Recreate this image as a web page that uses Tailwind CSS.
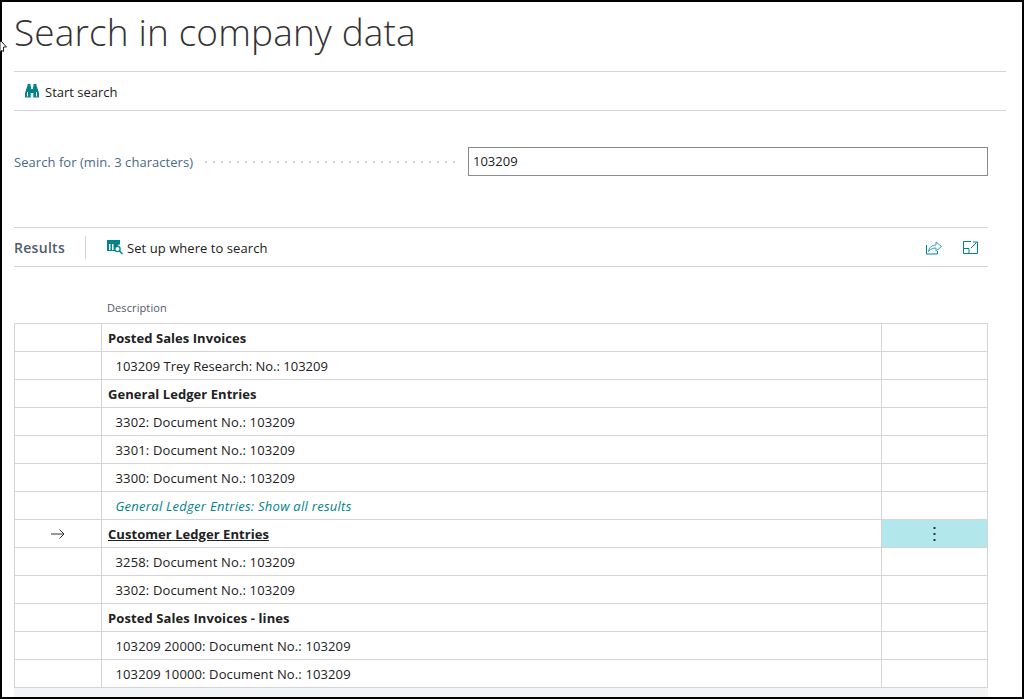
<!DOCTYPE html>
<html><head><meta charset="utf-8"><script src="https://cdn.jsdelivr.net/npm/@tailwindcss/browser@4"></script></head>
<body class="m-0 bg-white">
<div class="relative w-[1024px] h-[699px] bg-white border-2 border-black font-['Open_Sans','Noto_Sans',sans-serif] text-[13px] text-[#212121]">
  <svg class="absolute left-[-2px] top-[39px]" width="8" height="14" viewBox="0 0 8 14"><path d="M0 .5H1.500L6.500 6H3.500V10.500L1.500 9.500L0 11Z" fill="#fff" stroke="#222" stroke-width="1"/></svg>
  <div class="pl-[12px] pr-[16px]">
    <div class="h-[70px] border-b border-[#d4d4d8]">
      <h1 class="pt-[5px] text-[37px] leading-[50px] font-light text-[#333] tracking-[0.13px]">Search in company data</h1>
    </div>
    <div class="h-[39px] border-b border-[#d4d4d8] flex items-center pl-[11px] gap-[6px]">
      <svg width="14" height="14" viewBox="0 0 14 14"><path fill="#00838a" fill-rule="evenodd" d="M2.500 0h3v2.500h.6V5H8V2.500h.5V0h3v2.500h.4L14 9v4.500H8.300V9H5.700v4.500H0V9l2.100-6.500h.4ZM2 8v4.500h1V8ZM11 8v4.500h1V8Z"/></svg>
      <span class="pt-[4px]">Start search</span>
    </div>
    <div class="flex items-center h-[104px] mr-[18px] pb-[4px]">
      <span class="w-[179px] pt-[3px] text-[#4a6a8a] shrink-0 whitespace-nowrap tracking-[0.05px]">Search for (min. 3 characters)</span>
      <div class="w-[252px] h-[2px] shrink-0 mr-[11px] ml-[12px] bg-[linear-gradient(to_right,#d0d0d4_2px,transparent_2px)] bg-[length:8px_2px] mt-[2px]"></div>
      <div class="flex-1 h-[29px] border border-[#8a8a8a] flex items-center pl-[4px] pt-[2px]">103209</div>
    </div>
    <div class="mr-[18px] h-[1px] mt-[12px] bg-[#d4d4d8]"></div>
    <div class="mr-[18px] h-[39px] border-b border-[#d4d4d8] flex items-center">
      <span class="w-[71px] text-[14px] font-semibold text-[#505c6d] tracking-[0.3px]">Results</span>
      <div class="w-px h-[23px] bg-[#d4d4d8]"></div>
      <div class="flex items-center gap-[4px] pl-[21px]">
        <svg width="16" height="15" viewBox="0 0 16 15"><path fill="#00838a" d="M0 0h13v4.500h-1.500V5.500a4 4 0 0 0-3.500 5.500H0Z"/><path fill="#fff" d="M2 4h1.500v6H2zM5 4h1.500v6H5z"/><circle cx="10.500" cy="9" r="2.600" fill="none" stroke="#00838a" stroke-width="1.300"/><path d="M12.500 11L15.500 14" stroke="#00838a" stroke-width="1.500"/></svg>
        <span class="pt-[4px] tracking-[0.06px]">Set up where to search</span>
      </div>
      <div class="ml-auto flex items-center gap-[21px] pr-[10px]">
        <svg width="16" height="15" viewBox="0 0 16 15" fill="none"><path d="M.5 5v9h11v-3" stroke="#00838a"/><path d="M2.500 11.500C3 7.500 6 5 10 5V2l5.500 4.500L10 11V8C7 8 4.500 9 2.500 11.500Z" stroke="#2aa3b5"/></svg>
        <svg width="15" height="13" viewBox="0 0 15 13" fill="none"><path d="M8 .5H.5v12h14V5" stroke="#00838a"/><path d="M.5 7.500H6v5" stroke="#00838a"/><path d="M8 7l5.500-5.500M10 1h4.500v4" stroke="#00838a"/></svg>
      </div>
    </div>
    <div class="mr-[18px]">
      <div class="h-[56px] pl-[93px] pt-[33px] text-[11px] leading-[16px] text-[#505c6d] tracking-[0.1px]">Description</div>
      <div class="grid grid-cols-[86px_780px_1fr] border-l border-t border-r border-[#d4d4d8] h-[365px] grid-rows-[repeat(13,28px)] box-border [&>div]:border-b [&>div]:border-[#d4d4d8] [&>div]:flex [&>div]:items-center">
        <div></div><div class="border-l pl-[6px] pt-[2px] font-bold tracking-[0.05px]">Posted Sales Invoices</div><div class="border-l"></div>
        <div></div><div class="border-l pl-[13.500px] pt-[2px]">103209 Trey Research: No.: 103209</div><div class="border-l"></div>
        <div></div><div class="border-l pl-[6px] pt-[2px] font-bold tracking-[0.05px]">General Ledger Entries</div><div class="border-l"></div>
        <div></div><div class="border-l pl-[13.500px] pt-[2px] tracking-[0.15px]">3302: Document No.: 103209</div><div class="border-l"></div>
        <div></div><div class="border-l pl-[13.500px] pt-[2px] tracking-[0.15px]">3301: Document No.: 103209</div><div class="border-l"></div>
        <div></div><div class="border-l pl-[13.500px] pt-[2px] tracking-[0.15px]">3300: Document No.: 103209</div><div class="border-l"></div>
        <div></div><div class="border-l pl-[13.500px] pt-[2px] italic text-[#00838a] tracking-[0.27px]">General Ledger Entries: Show all results</div><div class="border-l"></div>
        <div class="justify-center"><svg width="14" height="10" viewBox="0 0 14 10" fill="none" stroke="#333"><path d="M0 5h13M8.500 .5L13 5l-4.500 4.500"/></svg></div><div class="border-l pl-[6px] pt-[2px] font-bold underline tracking-[0.05px]">Customer Ledger Entries</div><div class="border-l bg-[#b2e8ec] justify-center"><svg width="3" height="14" viewBox="0 0 3 14" fill="#333"><rect x=".500" y="0" width="2" height="2"/><rect x=".500" y="6" width="2" height="2"/><rect x=".500" y="12" width="2" height="2"/></svg></div>
        <div></div><div class="border-l pl-[13.500px] pt-[2px] tracking-[0.15px]">3258: Document No.: 103209</div><div class="border-l"></div>
        <div></div><div class="border-l pl-[13.500px] pt-[2px] tracking-[0.15px]">3302: Document No.: 103209</div><div class="border-l"></div>
        <div></div><div class="border-l pl-[6px] pt-[2px] font-bold tracking-[0.1px]">Posted Sales Invoices - lines</div><div class="border-l"></div>
        <div></div><div class="border-l pl-[13.500px] pt-[2px] tracking-[0.12px]">103209 20000: Document No.: 103209</div><div class="border-l"></div>
        <div></div><div class="border-l pl-[13.500px] pt-[2px] tracking-[0.12px]">103209 10000: Document No.: 103209</div><div class="border-l"></div>
      </div>
      <div class="h-[9px] bg-[#f3f4f6]"></div>
    </div>
  </div>
</div>
</body></html>
